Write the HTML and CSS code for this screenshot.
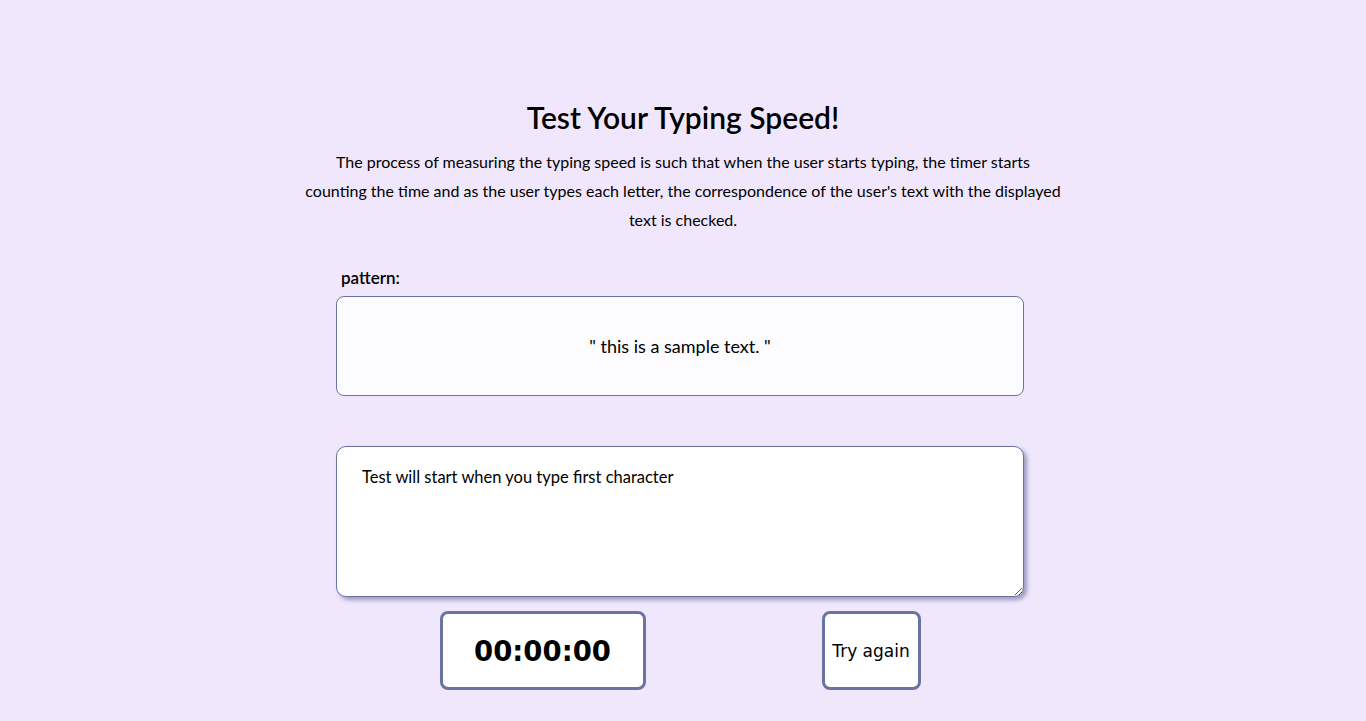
FILE: index.html
```html
<!DOCTYPE html>
<html lang="en">
<head>
<meta charset="utf-8">
<title>Test Your Typing Speed</title>
<link rel="stylesheet" href="styles.css">
</head>
<body>
<main class="page">
  <h1 class="title">Test Your Typing Speed!</h1>
  <p class="intro">The process of measuring the typing speed is such that when the user starts typing, the timer starts counting the time and as the user types each letter, the correspondence of the user's text with the displayed text is checked.</p>
  <section class="test">
    <div class="label">pattern:</div>
    <div class="pattern">" this is a sample text. "</div>
    <textarea class="typing" placeholder="Test will start when you type first character"></textarea>
    <div class="controls">
      <div class="timer">00:00:00</div>
      <button class="retry">Try again</button>
    </div>
  </section>
</main>
</body>
</html>
```
FILE: styles.css
```css
* { box-sizing: border-box; }
html, body { margin: 0; padding: 0; }
body {
  background: #f1e7fd;
  font-family: Lato, "Open Sans", sans-serif;
  color: #000;
  min-height: 721px;
}
.page {
  display: flex;
  flex-direction: column;
  align-items: center;
  padding-top: 99px;
}
.title {
  margin: 0;
  font-size: 30px;
  font-weight: 600;
  line-height: 36px;
}
.intro {
  margin: 12px 0 0;
  width: 758px;
  text-align: center;
  font-size: 16px;
  line-height: 29px;
}
.test {
  width: 688px;
  margin-top: 32px;
  margin-right: 6px;
  display: flex;
  flex-direction: column;
}
.label {
  font-size: 17px;
  font-weight: 600;
  padding-left: 5px;
  line-height: 24px;
}
.pattern {
  margin-top: 6px;
  height: 100px;
  background: #fcfcff;
  border: 1px solid #6b74a0;
  border-radius: 8px;
  display: flex;
  align-items: center;
  justify-content: center;
  font-size: 18px;
}
.typing {
  margin-top: 50px;
  height: 151px;
  width: 688px;
  background: #fff;
  border: 1px solid #6b74a0;
  border-radius: 10px;
  box-shadow: 3px 3px 4px rgba(80, 90, 140, 0.55);
  padding: 19px 25px;
  font-family: Lato, "Open Sans", sans-serif;
  font-size: 16.5px;
  line-height: 22px;
  outline: none;
}
.typing::placeholder { color: #000; opacity: 1; }
.controls {
  display: flex;
  justify-content: center;
  gap: 176px;
  margin-top: 14px;
}
.timer {
  width: 206px;
  height: 79px;
  background: #fff;
  border: 3px solid #6b74a0;
  border-radius: 8px;
  display: flex;
  align-items: center;
  justify-content: center;
  font-family: "Comic Sans MS", "DejaVu Sans", sans-serif;
  font-size: 27.5px;
  font-weight: bold;
}
.retry {
  width: 99px;
  height: 79px;
  background: #fff;
  border: 3px solid #6b74a0;
  border-radius: 8px;
  font-family: "Comic Sans MS", "DejaVu Sans", sans-serif;
  font-size: 17px;
  color: #000;
  padding: 0;
}
```
